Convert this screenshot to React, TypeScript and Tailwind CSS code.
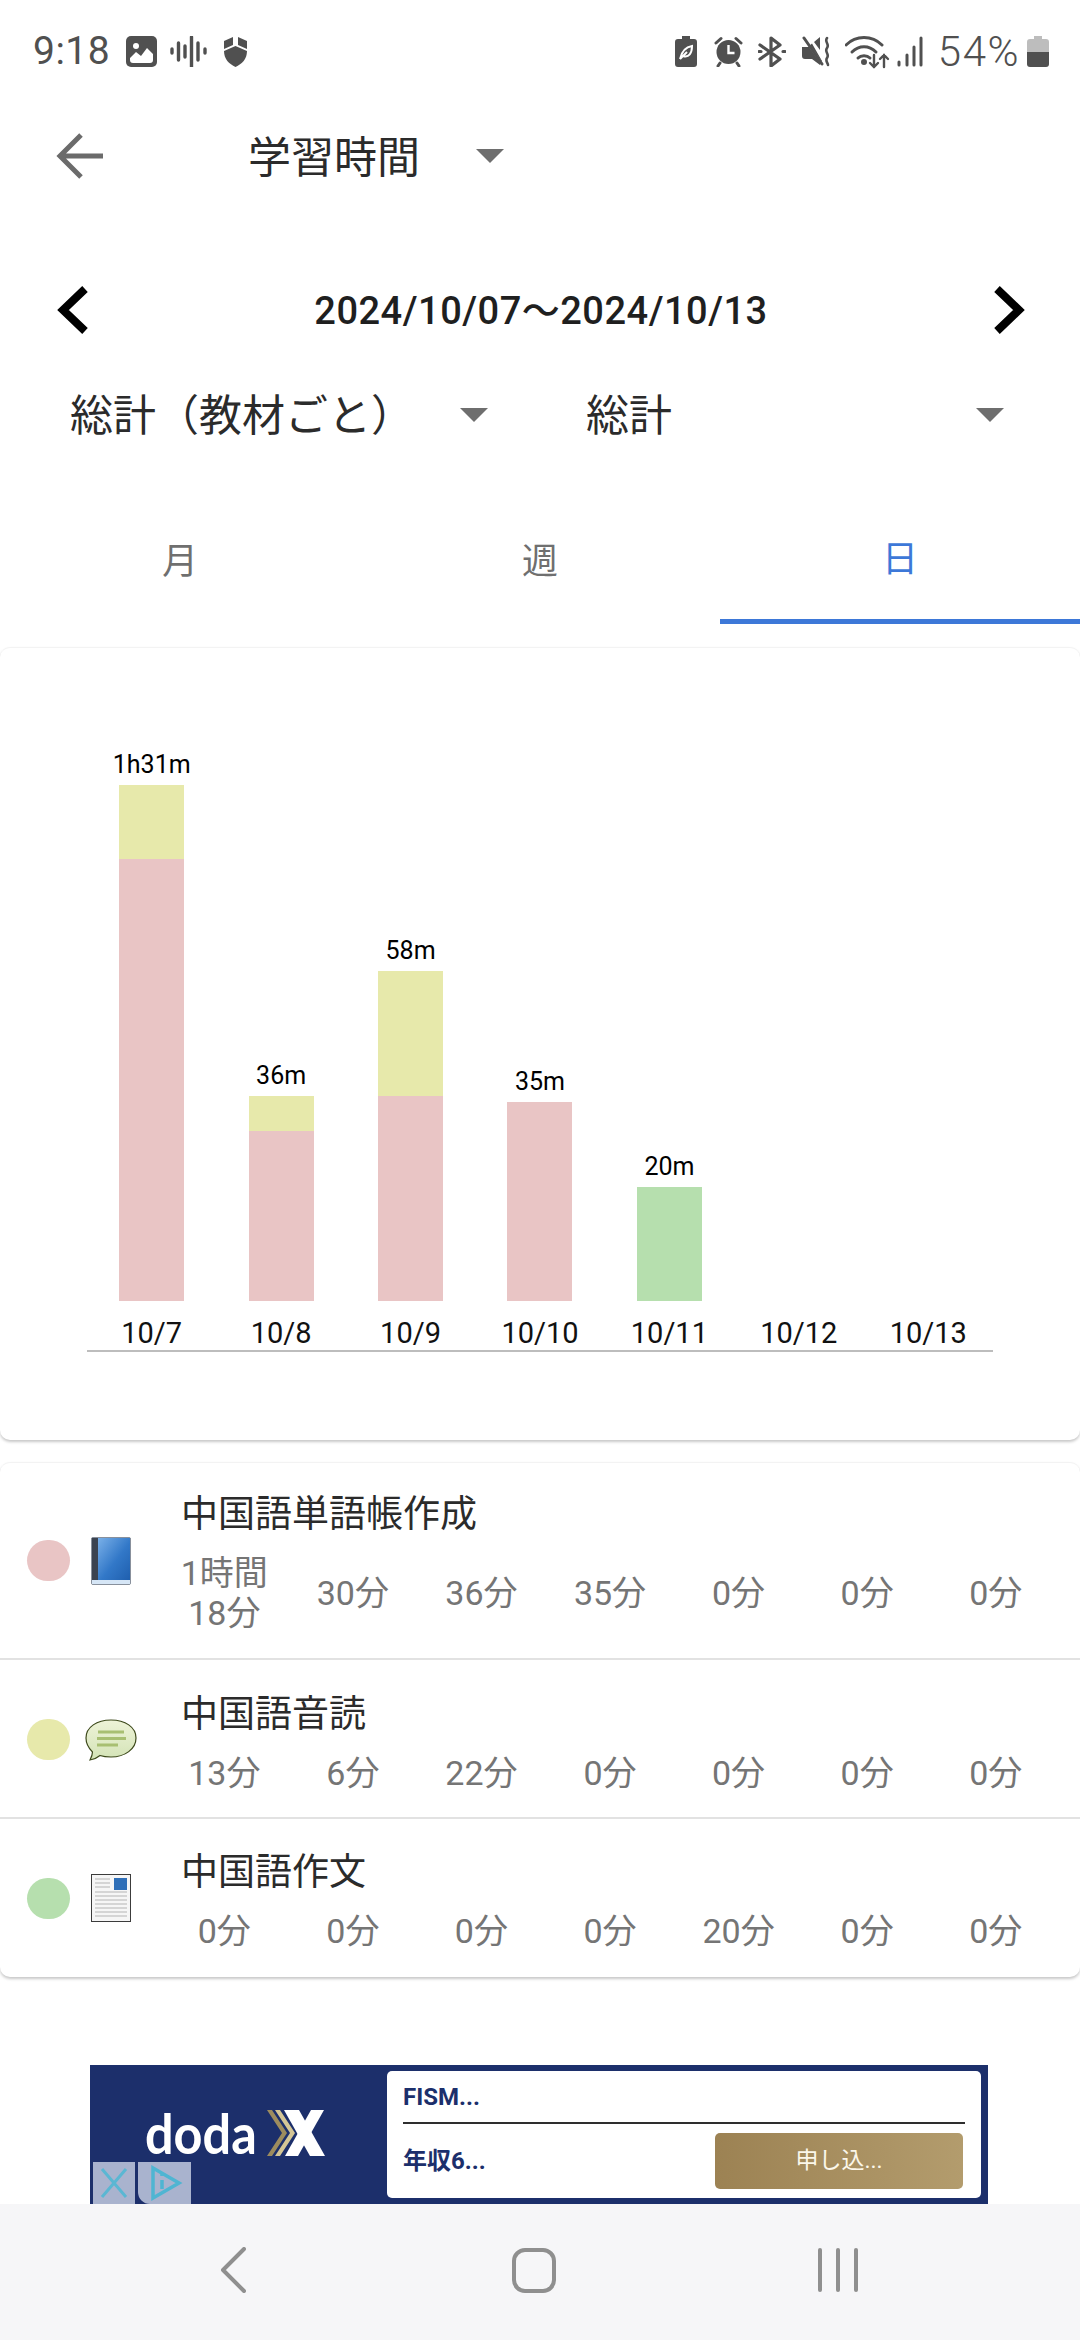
import React from 'react';

const bars = [
  { total: '1h31m', date: '10/7', segs: [{ color: 'bg-[#e7e9ab]', h: 74 }, { color: 'bg-[#e9c5c5]', h: 442 }] },
  { total: '36m', date: '10/8', segs: [{ color: 'bg-[#e7e9ab]', h: 35 }, { color: 'bg-[#e9c5c5]', h: 170 }] },
  { total: '58m', date: '10/9', segs: [{ color: 'bg-[#e7e9ab]', h: 125 }, { color: 'bg-[#e9c5c5]', h: 205 }] },
  { total: '35m', date: '10/10', segs: [{ color: 'bg-[#e9c5c5]', h: 199 }] },
  { total: '20m', date: '10/11', segs: [{ color: 'bg-[#b6dfae]', h: 114 }] },
  { total: '', date: '10/12', segs: [] },
  { total: '', date: '10/13', segs: [] },
];

function StatusLeftIcons() {
  return (
    <div className="flex items-center text-[#505050]">
      <svg width="31" height="31" viewBox="0 0 31 31" className="ml-[16px]">
        <rect width="31" height="31" rx="5" fill="#505050" />
        <circle cx="10" cy="10" r="3" fill="#fff" />
        <path d="M4 22 L10 16 L15 20 L21 12 L27 18 V24 a3 3 0 0 1 -3 3 H7 a3 3 0 0 1 -3 -3 Z" fill="#fff" />
      </svg>
      <svg width="38" height="31" viewBox="0 0 38 31" className="ml-[13px]" stroke="#505050" strokeWidth="3.4" strokeLinecap="round">
        <path d="M2 13v4M8.5 7v17M15 10v11M21.5 1v30M28 7v17M35 13v4" />
      </svg>
      <svg width="25" height="31" viewBox="0 0 25 31" className="ml-[15px]">
        <path d="M1 5 L10 1 V9 L1 13 Z M15 1 L24 5 V13 L15 9 Z" fill="#505050" />
        <path d="M1 15 L12.5 10 L24 15 C24 23 19 28 12.5 31 C6 28 1 23 1 15 Z" fill="#505050" />
      </svg>
    </div>
  );
}

function StatusRightIcons() {
  return (
    <div className="flex items-center">
      <svg width="22" height="31" viewBox="0 0 22 31">
        <path d="M7 0h8v3h4a3 3 0 0 1 3 3v22a3 3 0 0 1-3 3H3a3 3 0 0 1-3-3V6a3 3 0 0 1 3-3h4z" fill="#505050" />
        <path d="M5 23 C7 14 11 11 17 10 C17 17 14 22 8 20 M5 23 L12 16" fill="none" stroke="#fff" strokeWidth="2" />
      </svg>
      <svg width="29" height="31" viewBox="0 0 29 31" className="ml-[17px]">
        <circle cx="14.5" cy="16" r="12" fill="#505050" />
        <path d="M14.5 9v8h6" fill="none" stroke="#fff" strokeWidth="2.4" />
        <path d="M2 7 L7 2.500 M27 7 L22 2.500 M6 27 L4 30 M23 27 L25 30" stroke="#505050" strokeWidth="3" strokeLinecap="round" />
      </svg>
      <svg width="28" height="31" viewBox="0 0 28 31" className="ml-[15px]" fill="none" stroke="#505050" strokeWidth="3.2" strokeLinecap="round" strokeLinejoin="round">
        <path d="M2 9 L22 23 L13 30 V2 L22 9 L2 23" />
        <path d="M1 15.500h2M25 15.500h2" />
      </svg>
      <svg width="28" height="31" viewBox="0 0 28 31" className="ml-[16px]">
        <path d="M0 11h6l4-3.500L20 25l-2 4-8-6H3a3 3 0 0 1-3-3z M12 6l6-5v13z" fill="#505050" />
        <path d="M1 1 L21 29" stroke="#fff" strokeWidth="2" />
        <path d="M2 2 L20 28" stroke="#505050" strokeWidth="3" strokeLinecap="round" />
        <path d="M25 2 C22 6 28 8 25 12 C22 16 28 18 25 22 C23 25 26 27 26 29" fill="none" stroke="#505050" strokeWidth="2.6" strokeLinecap="round" />
      </svg>
      <svg width="45" height="34" viewBox="0 0 45 34" className="ml-[15px]" fill="none" stroke="#505050" strokeWidth="3" strokeLinecap="round">
        <path d="M1 10 C11 0 27 0 37 10" />
        <path d="M7 17 C14 10 24 10 31 17" />
        <path d="M13 23 C16 20 22 20 25 23" />
        <circle cx="19" cy="27" r="1.500" fill="#505050" />
        <path d="M29 20v12M25 28l4 4 4-4" strokeWidth="2.400" />
        <path d="M39 32V20M35 24l4-4 4 4" strokeWidth="2.400" />
      </svg>
      <svg width="26" height="31" viewBox="0 0 26 31" className="ml-[7px]" stroke="#505050" strokeWidth="3" strokeLinecap="round">
        <path d="M2 26v3M10 19v10M17 11v18M24 2v27" />
      </svg>
      <span className="ml-[15px] text-[42px] leading-none text-[#505050] font-light tracking-[1.500px]">54%</span>
      <svg width="22" height="31" viewBox="0 0 22 31" className="ml-[7px]">
        <path d="M7 0h8v3h4a3 3 0 0 1 3 3v10H0V6a3 3 0 0 1 3-3h4z" fill="#bdbdbd" />
        <path d="M0 16h22v12a3 3 0 0 1-3 3H3a3 3 0 0 1-3-3z" fill="#505050" />
      </svg>
    </div>
  );
}

function Caret() {
  return <div className="w-0 h-0 border-l-[14px] border-r-[14px] border-t-[14px] border-l-transparent border-r-transparent border-t-[#6e6e6e]" />;
}

function BookIcon() {
  return (
    <svg width="40" height="48" viewBox="0 0 40 48">
      <defs>
        <linearGradient id="book" x1="0" y1="0" x2="1" y2="1">
          <stop offset="0" stopColor="#7ab0e8" />
          <stop offset="0.55" stopColor="#3278c8" />
          <stop offset="1" stopColor="#1f5fae" />
        </linearGradient>
      </defs>
      <rect x="0.500" y="0.500" width="39" height="47" rx="1" fill="#12233a" />
      <rect x="1" y="1" width="6" height="42" fill="#3b4350" />
      <rect x="7" y="1" width="32" height="42" fill="url(#book)" />
      <rect x="1" y="43" width="38" height="4" fill="#d6e6f6" />
    </svg>
  );
}

function BubbleIcon() {
  return (
    <svg width="52" height="42" viewBox="0 0 52 42">
      <defs>
        <linearGradient id="bubble" x1="0" y1="0" x2="0" y2="1">
          <stop offset="0" stopColor="#eef3d8" />
          <stop offset="1" stopColor="#d3e3b6" />
        </linearGradient>
      </defs>
      <path d="M26 1 C40 1 51 8 51 19 C51 30 40 38 26 38 C22 38 18 37.500 15 36.500 C12 39 9 40.500 5 41 C6.500 38 7.500 35.500 7.500 33 C3.500 29 1 24.500 1 19 C1 8 12 1 26 1 Z" fill="url(#bubble)" stroke="#3e4a1c" strokeWidth="1.200" />
      <path d="M13 13h26M12 19.500h29M12 26h21" stroke="#a8bf72" strokeWidth="3" />
    </svg>
  );
}

function DocIcon() {
  return (
    <svg width="40" height="48" viewBox="0 0 40 48">
      <rect x="0.500" y="0.500" width="39" height="47" fill="#f6f6f6" stroke="#3c3c3c" />
      <rect x="23" y="4" width="13" height="12" fill="#2f6fb8" />
      <path d="M4 5h15M4 9h15M4 13h15M4 18h32M4 22h32M4 26h32M4 30h32M4 34h32M4 38h32M4 42h32" stroke="#b4b4b4" strokeWidth="1.200" />
    </svg>
  );
}

function StudyRow({ dot, icon, title, values, rowClass, textClass, leftClass }: { dot: string; icon: React.ReactNode; title: string; values: React.ReactNode[]; rowClass: string; textClass: string; leftClass: string }) {
  return (
    <div className={`flex ${rowClass}`}>
      <div className={`w-[160px] flex items-center shrink-0 ${leftClass}`}>
        <div className={`ml-[27px] w-[43px] h-[41px] rounded-full ${dot}`} />
        <div className="ml-[15px] w-[52px] flex justify-center">{icon}</div>
      </div>
      <div className={`flex-1 pr-[20px] ${textClass}`}>
        <div className="pl-[21px] text-[37px] leading-[50px] text-[#2b2b2b]">{title}</div>
        <div className="grid grid-cols-7 items-center mt-[13px] text-[34px] leading-[40px] text-[#757575] text-center">
          {values.map((v, i) => (
            <div key={i}>{v}</div>
          ))}
        </div>
      </div>
    </div>
  );
}

export default function App() {
  return (
    <div className="w-[1080px] h-[2340px] bg-white overflow-hidden flex flex-col font-['Roboto','Noto_Sans_CJK_JP',sans-serif]">
      {/* status bar */}
      <div className="h-[105px] shrink-0 flex items-center justify-between pl-[33px] pr-[31px] pb-[2px]">
        <div className="flex items-center">
          <span className="text-[39px] leading-none text-[#505050] tracking-[0.5px]">9:18</span>
          <StatusLeftIcons />
        </div>
        <StatusRightIcons />
      </div>

      {/* header */}
      <div className="h-[102px] shrink-0 flex items-center pl-[56px]">
        <svg width="47" height="46" viewBox="0 0 47 46" fill="none" stroke="#6b6b6b" strokeWidth="5">
          <path d="M47 23H4M25 2 L4 23 L25 44" />
        </svg>
        <span className="ml-[145px] pt-[5px] text-[43px] leading-none text-[#2b2b2b]">学習時間</span>
        <div className="ml-[56px]"><Caret /></div>
      </div>

      {/* date range */}
      <div className="mt-[63px] h-[80px] shrink-0 flex items-center justify-between pl-[56px] pr-[54px]">
        <svg width="33" height="48" viewBox="0 0 33 48" fill="none" stroke="#000" strokeWidth="8">
          <path d="M29 3 L7 24 L29 45" />
        </svg>
        <span className="pt-[2px] text-[38px] leading-none text-[#1f1f1f] font-medium tracking-[0.5px]">2024/10/07〜2024/10/13</span>
        <svg width="33" height="48" viewBox="0 0 33 48" fill="none" stroke="#000" strokeWidth="8">
          <path d="M4 3 L26 24 L4 45" />
        </svg>
      </div>

      {/* dropdowns */}
      <div className="mt-[25px] h-[80px] shrink-0 flex items-center">
        <div className="w-[516px] pl-[70px] pr-[28px] flex items-center justify-between">
          <span className="pt-[2px] text-[43px] leading-none text-[#2b2b2b]">総計（教材ごと）</span>
          <Caret />
        </div>
        <div className="flex-1 pl-[70px] pr-[76px] flex items-center justify-between">
          <span className="pt-[2px] text-[43px] leading-none text-[#2b2b2b]">総計</span>
          <Caret />
        </div>
      </div>

      {/* tabs */}
      <div className="mt-[45px] h-[124px] shrink-0 grid grid-cols-3 text-[36px] text-[#6f6f6f]">
        <div className="flex items-center justify-center">月</div>
        <div className="flex items-center justify-center">週</div>
        <div className="flex items-center justify-center text-[#3d78d8] border-b-[5px] border-[#3d78d8]">日</div>
      </div>

      {/* chart card */}
      <div className="mt-[23px] h-[793px] shrink-0 rounded-[10px] bg-white border-t border-[#f3f3f3] shadow-[0_2px_3px_rgba(0,0,0,0.22)] flex flex-col justify-end pb-[88px] px-[87px]">
        <div className="flex border-b-2 border-[#bdbdbd] pb-[3px]">
          {bars.map((b) => (
            <div key={b.date} className="flex-1 flex flex-col items-center justify-end">
              {b.total && <div className="text-[25px] leading-[30px] text-black mb-[5px]">{b.total}</div>}
              {b.segs.map((s, i) => (
                <div key={i} className={`w-[65px] ${s.color}`} style={{ height: s.h }} />
              ))}
              <div className="mt-[17px] mb-[-1px] text-[29px] leading-[30px] text-[#111]">{b.date}</div>
            </div>
          ))}
        </div>
      </div>

      {/* list card */}
      <div className="mt-[22px] h-[515px] shrink-0 rounded-[10px] bg-white border-t border-[#f3f3f3] shadow-[0_2px_3px_rgba(0,0,0,0.22)] flex flex-col">
        <StudyRow
          rowClass="h-[197px] border-b-2 border-[#e2e2e2]"
          leftClass=""
          textClass="pt-[27px]"
          dot="bg-[#e9c5c5]"
          icon={<BookIcon />}
          title="中国語単語帳作成"
          values={[<>1時間<br />18分</>, '30分', '36分', '35分', '0分', '0分', '0分']}
        />
        <StudyRow
          rowClass="h-[159px] border-b-2 border-[#e2e2e2]"
          leftClass="pt-[2px]"
          textClass="pt-[30px]"
          dot="bg-[#e7e9ab]"
          icon={<BubbleIcon />}
          title="中国語音読"
          values={['13分', '6分', '22分', '0分', '0分', '0分', '0分']}
        />
        <StudyRow
          rowClass="h-[158px]"
          leftClass=""
          textClass="pt-[29px]"
          dot="bg-[#b6dfae]"
          icon={<DocIcon />}
          title="中国語作文"
          values={['0分', '0分', '0分', '0分', '20分', '0分', '0分']}
        />
      </div>

      {/* ad banner */}
      <div className="mt-[88px] ml-[90px] w-[898px] h-[139px] shrink-0 relative bg-[#1c2f6b] flex items-center pr-[7px]">
        <div className="w-[297px] flex items-center justify-start pl-[55px] pb-[4px]">
          <span className="font-['Lato',sans-serif] text-[56px] leading-none font-bold text-white scale-x-[0.9] origin-left w-[122px]">doda</span>
          <svg width="58" height="46" viewBox="0 0 58 46" className="ml-[0px]">
            <path d="M0 0h5l15 23L5 46H0l15-23z" fill="#9d8c5e" />
            <path d="M8 0h5l15 23-15 23H8l15-23z" fill="#d4c696" />
            <path d="M17 0h15l26 46H43z" fill="#fff" />
            <path d="M57 0H44L18 46h13z" fill="#fff" />
          </svg>
        </div>
        <div className="flex-1 h-[127px] bg-white rounded-[5px] px-[16px] flex flex-col">
          <div className="h-[53px] flex items-center border-b-2 border-[#2e2e2e] text-[24px] font-bold text-[#1c2f6b]">FISM...</div>
          <div className="flex-1 flex items-center justify-between pr-[2px]">
            <span className="text-[24px] font-bold text-[#1c2f6b]">年収6...</span>
            <div className="w-[248px] h-[56px] rounded-[5px] bg-gradient-to-r from-[#9c8253] to-[#b39c6d] flex items-center justify-center text-[23px] text-[#fbf7ea]">申し込...</div>
          </div>
        </div>
        <div className="absolute left-[3px] bottom-0 w-[42px] h-[42px] bg-[#a9b3ce] flex items-center justify-center">
          <svg width="28" height="32" viewBox="0 0 28 32" fill="none" stroke="#5ab7d3" strokeWidth="3"><path d="M2 2 L26 30M26 2 L2 30" /></svg>
        </div>
        <div className="absolute left-[48px] bottom-0 w-[53px] h-[42px] bg-[#a9b3ce] rounded-bl-[12px] flex items-center justify-center">
          <svg width="36" height="36" viewBox="0 0 36 36" fill="none" stroke="#4fb5d2" strokeWidth="3.500"><path d="M6 3v30l26-15z" /><path d="M15 15v9M15 9v2" /></svg>
        </div>
      </div>

      {/* navigation bar */}
      <div className="flex-1 bg-[#f6f6f8] grid grid-cols-3 items-center px-[40px] pb-[4px]">
        <div className="flex justify-center pl-[52px]">
          <svg width="26" height="46" viewBox="0 0 26 46" fill="none" stroke="#8f8f8f" strokeWidth="4" strokeLinecap="round" strokeLinejoin="round"><path d="M24 2 L3 23 L24 44" /></svg>
        </div>
        <div className="flex justify-center pr-[12px]">
          <div className="w-[44px] h-[45px] rounded-[13px] border-[4px] border-[#8f8f8f]" />
        </div>
        <div className="flex justify-center gap-[14px] pr-[70px]">
          <div className="w-[4px] h-[44px] bg-[#8f8f8f] rounded-full" />
          <div className="w-[4px] h-[44px] bg-[#8f8f8f] rounded-full" />
          <div className="w-[4px] h-[44px] bg-[#8f8f8f] rounded-full" />
        </div>
      </div>
    </div>
  );
}
